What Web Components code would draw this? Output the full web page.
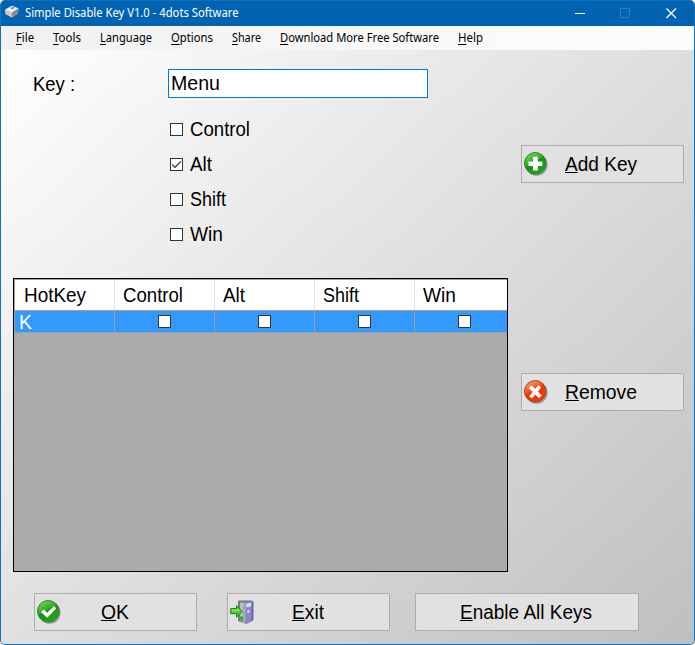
<!DOCTYPE html>
<html lang="en"><head><meta charset="utf-8"><title>Simple Disable Key</title>
<style>html,body{margin:0;background:#fff}body{width:695px;height:645px;overflow:hidden}</style></head>
<body><app-window></app-window>
<script>
const define = (name, html, setup) => customElements.define(name, class extends HTMLElement {
  connectedCallback() {
    if (this.shadowRoot) return;
    const root = this.attachShadow({ mode: 'open' });
    const t = document.createElement('template');
    t.innerHTML = html;
    root.append(t.content.cloneNode(true));
    if (setup) setup(this, root);
  }
});

// A single-line label; "w" gives its drawn width and "&" marks the access key.
define('ui-label', `<style>
:host{display:block;white-space:pre;flex:none}
span{display:inline-block;transform-origin:0 0}
u{text-decoration:underline;text-decoration-thickness:1px;text-underline-offset:var(--uo,1px);text-decoration-skip-ink:none}
</style><span></span>`, (el, root) => {
  const s = root.querySelector('span'), text = el.getAttribute('text');
  const i = text.indexOf('&');
  if (i >= 0) {
    const u = document.createElement('u');
    u.textContent = text[i + 1];
    s.append(text.slice(0, i), u, text.slice(i + 2));
  } else s.textContent = text;
  const w = +el.getAttribute('w');
  if (w) {
    s.style.transform = `scaleX(${w / s.getBoundingClientRect().width})`;
    el.style.width = w + 'px';
  }
});

define('check-box', `<style>
:host{display:flex;align-items:center;height:13px;gap:7px;line-height:22px}
i{box-sizing:border-box;width:13px;height:13px;border:1px solid #333;background:#fff;display:block;flex:none}
svg{display:none}:host([checked]) svg{display:block}
::slotted(*){padding-bottom:2px}
</style><i><svg width="11" height="11" viewBox="0 0 11 11"><path d="M1.2 5.4 4 8.3 10 2.4" fill="none" stroke="#333" stroke-width="1.2"/></svg></i><slot></slot>`);

define('push-button', `<style>
:host{box-sizing:border-box;display:flex;width:163px;height:38px;border:1px solid #adadad;background:#e1e1e1;padding:6px 0 0 2px;line-height:24px}
.icon{width:26px;height:26px;flex:none}
.text{padding:0 0 0 var(--gap,15px)}
</style><div class="icon"><slot name="icon"></slot></div><div class="text"><slot></slot></div>`);

const glyphs = {
  add: '<path d="M9 4.8h4.8v4.6h4.6v4.6h-4.6v4.6H9V14H4.4V9.4H9z" fill="#fff"/>',
  remove: '<path d="m7.6 5.6 3.6 3.5 3.3-3.9 2.6 2-3.1 4.2 3.6 4-2.7 2.5-3.7-3.5-3.2 3.9-2.8-2.1 3.4-4.1-3.9-4.1z" fill="#fff"/>',
  ok: '<path d="m3.9 12 2.9-2.5 3.4 3.2 6.8-6.8 2.2 2.6-9 9.3z" fill="#fff"/>'
};
define('ui-icon', `<style>:host{display:block}svg{display:block;overflow:visible}</style>`, (el, root) => {
  const k = el.getAttribute('kind'), d = document.createElement('div');
  if (k === 'exit') d.innerHTML = `<svg width="25" height="25" viewBox="0 0 25 25">
    <path d="M8 1.2Q8 .4 9 .4h13q1 0 1 1v19.2l-6 3.2L8 21z" fill="#77777b"/>
    <path d="M10 2.5h5v18h-5z" fill="#b9bbc4"/><path d="M9.5 16.5h4v3.8l-4-.8z" fill="#24b51c"/>
    <path d="m13 3 10-2v18.8L15.6 24 13 22.6z" fill="#8885cb"/><path d="m13 3 2.6-.5V24L13 22.6z" fill="#a7a9b3"/>
    <path d="m21.6 2 1.9-.3v18l-1.9 1.1z" fill="#6866a8"/>
    <path d="m16.2 3.7 5-.9v3.6l-5 .9z" fill="#d3e3fa"/><path d="m17.4 10.3 2-.3v2.6l-2 .4z" fill="#e3e8fa"/>
    <path d="M.7 8.6h5.8V5.8l5.8 5.6-5.8 5.8v-3.6H.7z" fill="#50cf35" stroke="#158613"/>
    <path d="M1.7 9.6h5.6V8l3 3H1.7z" fill="#a2ee78" opacity=".7"/></svg>`;
  else {
    const red = k === 'remove';
    d.innerHTML = `<svg width="24" height="24" viewBox="0 0 24 24"><defs>
    <linearGradient id="g" x1=".2" y1="0" x2=".75" y2="1"><stop offset="0" stop-color="${red ? '#f4a066' : '#7cd65b'}"/><stop offset=".42" stop-color="${red ? '#ed5525' : '#34a925'}"/><stop offset=".46" stop-color="${red ? '#f53408' : '#149313'}"/><stop offset="1" stop-color="${red ? '#f63b0c' : '#20ac12'}"/></linearGradient></defs>
    <circle cx="12.5" cy="12.6" r="11.1" fill="#444" opacity=".5"/>
    <circle cx="11.2" cy="11.2" r="10.7" fill="url(#g)" stroke="${red ? '#a9441e' : '#24862a'}" stroke-width="1"/>${glyphs[k]}</svg>`;
  }
  root.append(d);
});

define('title-bar', `<style>
:host{box-sizing:border-box;display:flex;height:26px;background:#0063b1;border-top:1px solid #1670b7;color:#fff;font:12px/24px "Noto Sans",sans-serif;padding-left:4px;border-radius:4px 4px 0 0}
.app{width:20px;padding-top:4px;box-sizing:border-box}svg{display:block}
.ctl{margin-left:auto;display:flex;gap:35px;padding:7px 17px 0 0}
</style><div class="app"><svg width="14" height="14" viewBox="0 0 14 14"><path d="m0 4.5 7-3.7 6.5 2.4-.6 5.3-6 4L.7 9z" fill="#dedede"/><path d="m0 4.5 7 3.2-.1 4.8L.7 9z" fill="#c9cacc"/><path d="m7 7.7 6.5-4.5-.6 5.3-6 4z" fill="#858a90"/><path d="m1.5 4.3 5.3-3.2 5.3 2.2L7 6.6z" fill="#f6f6f6"/><path d="m5 2.9 3-1.2 2.2 1.2-3.5 1.7z" fill="#3f9be0"/></svg></div>
<ui-label w="213.5" text="Simple Disable Key V1.0 - 4dots Software"></ui-label>
<div class="ctl"><svg width="11" height="11"><path d="M1 5.5h10" stroke="#fff"/></svg><svg width="11" height="11"><path d="M.5.5h9v9h-9z" fill="none" stroke="#2f7fc0"/></svg><svg width="11" height="11"><path d="m.5.5 9.5 9.5M10 .5.5 10" stroke="#fff" stroke-width="1.3"/></svg></div>`);

define('menu-bar', `<style>
:host{--uo:2px;box-sizing:border-box;display:flex;height:24px;gap:19px;padding-left:15px;background:linear-gradient(90deg,#f0f0f0,#fcfcfc 85%);font:12px/24px "Noto Sans",sans-serif;color:#000}
</style><ui-label w="18" text="&amp;File"></ui-label><ui-label w="28" text="&amp;Tools"></ui-label><ui-label w="52" text="&amp;Language"></ui-label><ui-label w="42" text="&amp;Options"></ui-label><ui-label w="29" text="&amp;Share"></ui-label><ui-label w="159" text="&amp;Download More Free Software"></ui-label><ui-label w="25" text="&amp;Help"></ui-label>`);

define('key-form', `<style>
:host{display:grid;grid-template-columns:135px 260px;height:209px;align-content:start}
.key{padding:4px 0 0;line-height:22px}
.input{box-sizing:border-box;height:29px;border:1px solid #0078d7;background:#fff;padding:2px 0 0 2px;line-height:23px}
.checks{grid-column:2;display:flex;flex-direction:column;gap:22px;padding:25px 0 0 2px}
</style><div class="key"><ui-label w="42" text="Key :"></ui-label></div><div class="input"><ui-label w="49" text="Menu"></ui-label></div>
<div class="checks"><check-box><ui-label w="60" text="Control"></ui-label></check-box><check-box checked><ui-label w="22" text="Alt"></ui-label></check-box><check-box><ui-label w="36" text="Shift"></ui-label></check-box><check-box><ui-label w="33" text="Win"></ui-label></check-box></div>`);

define('key-grid', `<style>
:host{box-sizing:border-box;display:block;width:495px;height:294px;border:1px solid #000;background:#ababab}
.r{display:grid;grid-template-columns:100px 100px 100px 100px 93px}
.h{box-sizing:border-box;height:32px;background:#fff;border-top:1px solid #a0a0a0;border-bottom:1px solid #a0a0a0;line-height:22px}
.h>*{padding:4px 0 0 8px;border-right:1px solid #e3e3e3}.h>:first-child{padding-left:9px;border-left:1px solid #a0a0a0}
.d{height:21px;background:#39f;border-bottom:1px solid #a0a0a0;color:#fff;line-height:22px}
.d>*{border-right:1px solid #a0a0a0;padding:4px 0 0 43px}.d>:first-child{padding:0 0 0 4px;border-left:1px solid #a0a0a0}
.r>:last-child{border-right:0}.r>*{box-sizing:border-box;min-width:0}
.r>*{margin-right:-1px}.r>:not(:first-child){margin-left:1px}.r>:last-child{margin-right:0}
</style><div class="r h"><div><ui-label w="62" text="HotKey"></ui-label></div><div><ui-label w="60" text="Control"></ui-label></div><div><ui-label w="22" text="Alt"></ui-label></div><div><ui-label w="36" text="Shift"></ui-label></div><div><ui-label w="33" text="Win"></ui-label></div></div>
<div class="r d"><div><ui-label w="13" text="K"></ui-label></div><div><check-box></check-box></div><div><check-box></check-box></div><div><check-box></check-box></div><div><check-box></check-box></div></div>`);

define('app-window', `<style>
:host{box-sizing:border-box;display:flex;flex-direction:column;width:695px;height:645px;border:1px solid #1670b7;border-top:0;border-radius:5px;overflow:hidden;color:#000;font:19.5px/22px "Liberation Sans",Arial,sans-serif;background:#c0c0c0}
.body{flex:1;display:flex;flex-direction:column;background:linear-gradient(137deg,#fff 0%,#bfbfbf 100%)}
.main{display:grid;grid-template-columns:495px 163px;column-gap:13px;padding:19px 0 0 12px;height:522px;box-sizing:border-box}
.left key-form{padding-left:20px}
.right{display:flex;flex-direction:column;gap:190px;padding-top:76px}
.foot{display:flex;padding:21px 0 0 33px}
.foot>:nth-child(2){margin-left:30px}.foot>:nth-child(3){margin-left:25px;width:224px}
</style><title-bar></title-bar><menu-bar></menu-bar><div class="body">
<div class="main"><div class="left"><key-form></key-form><key-grid></key-grid></div>
<div class="right"><push-button><ui-icon slot="icon" kind="add"></ui-icon><ui-label w="72" text="&amp;Add Key"></ui-label></push-button><push-button style="--gap:15px"><ui-icon slot="icon" kind="remove"></ui-icon><ui-label w="72" text="&amp;Remove"></ui-label></push-button></div></div>
<div class="foot"><push-button style="--gap:38px"><ui-icon slot="icon" kind="ok"></ui-icon><ui-label w="28" text="&amp;OK"></ui-label></push-button><push-button style="--gap:36px"><ui-icon slot="icon" kind="exit"></ui-icon><ui-label w="32" text="&amp;Exit"></ui-label></push-button><push-button style="--gap:16px"><ui-label w="132" text="&amp;Enable All Keys"></ui-label></push-button></div>
</div>`);
</script></body></html>
